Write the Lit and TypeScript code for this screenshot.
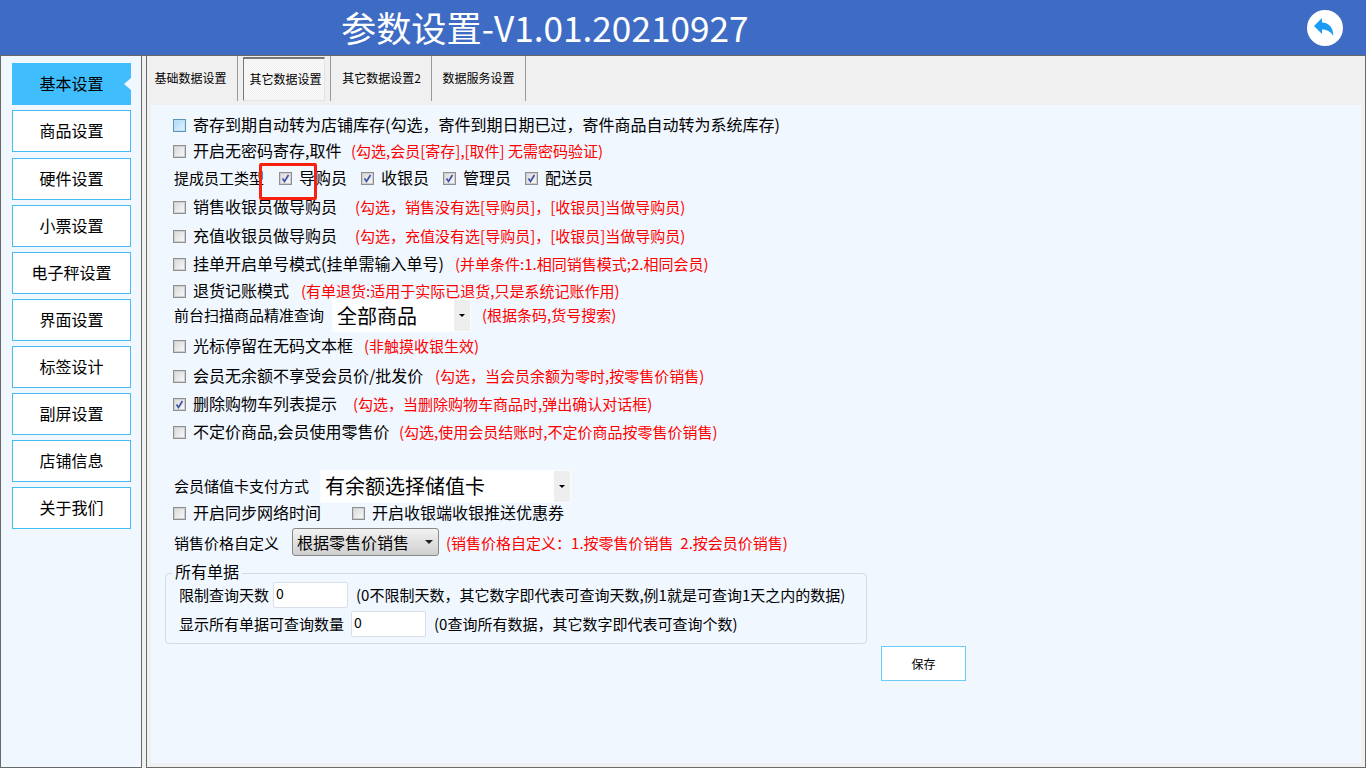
import { LitElement, html, css } from "lit";
import { customElement } from "lit/decorators.js";

type Cb = "off" | "on" | "hot";
/** mt: distance from the previous row; w: width of the label, so the note starts at its column */
interface Row { mt: number; box: Cb; text: string; w?: number; note?: string }

const rowsA: Row[] = [
  { mt: 0, box: "hot", text: "寄存到期自动转为店铺库存(勾选，寄件到期日期已过，寄件商品自动转为系统库存)" },
  { mt: 2, box: "off", text: "开启无密码寄存,取件", w: 158, note: "(勾选,会员[寄存],[取件] 无需密码验证)" },
];
const rowsB: Row[] = [
  { mt: 5, box: "off", text: "销售收银员做导购员", w: 162, note: "(勾选，销售没有选[导购员]，[收银员]当做导购员)" },
  { mt: 5, box: "off", text: "充值收银员做导购员", w: 162, note: "(勾选，充值没有选[导购员]，[收银员]当做导购员)" },
  { mt: 4, box: "off", text: "挂单开启单号模式(挂单需输入单号)", w: 262, note: "(并单条件:1.相同销售模式;2.相同会员)" },
  { mt: 3, box: "off", text: "退货记账模式", w: 108, note: "(有单退货:适用于实际已退货,只是系统记账作用)" },
];
const rowsC: Row[] = [
  { mt: 7, box: "off", text: "光标停留在无码文本框", w: 171, note: "(非触摸收银生效)" },
  { mt: 6, box: "off", text: "会员无余额不享受会员价/批发价", w: 242, note: "(勾选，当会员余额为零时,按零售价销售)" },
  { mt: 4, box: "on", text: "删除购物车列表提示", w: 160, note: "(勾选，当删除购物车商品时,弹出确认对话框)" },
  { mt: 4, box: "off", text: "不定价商品,会员使用零售价", w: 206, note: "(勾选,使用会员结账时,不定价商品按零售价销售)" },
];

const menu = ["基本设置", "商品设置", "硬件设置", "小票设置", "电子秤设置", "界面设置", "标签设计", "副屏设置", "店铺信息", "关于我们"];
const tabs = ["基础数据设置", "其它数据设置", "其它数据设置2", "数据服务设置"];
const staff = ["导购员", "收银员", "管理员", "配送员"];

@customElement("app-root")
export class AppRoot extends LitElement {
  static styles = css`
    :host { display: block; position: relative; width: 1366px; height: 768px; overflow: hidden; background: #f0f0f0;
      font-family: "Noto Sans CJK SC", "Liberation Sans", sans-serif; font-size: 16px; color: #000; }
    * { box-sizing: border-box; }
    .top { height: 56px; background: #3e6cc4; border-bottom: 1px solid #6a6a6a; display: flex; align-items: center; justify-content: space-between; padding: 0 23px 0 341px; }
    .title { color: #fff; font-size: 35.2px; line-height: 1; margin-top: -2px; }
    .back { width: 36px; height: 36px; display: block; }
    .main { display: flex; height: 712px; }
    .side { width: 142px; background: #f0f7ff; border: 1px solid #6a6a6a; border-top: 0; padding: 7px 10px 0 11px; display: flex; flex-direction: column; gap: 5px; margin-right: 4px; }
    .mi { height: 42px; background: #fff; border: 1px solid #45bcf3; font-size: 16px; display: flex; align-items: center; justify-content: center; position: relative; flex: none; padding-bottom: 2px; }
    .mi:nth-child(3) { margin-top: 1px; }
    .mi.sel { background: #40bdfd; border-color: #40bdfd; }
    .mi.sel::after { content: ""; position: absolute; right: -1px; top: 14px; border: 6px solid transparent; border-right: 7px solid #f0f7ff; border-left-width: 0; }
    .right { flex: 1; border: 1px solid #6a6a6a; border-top: 0; padding: 0 4px 4px 4px; display: flex; flex-direction: column; }
    .tabs { height: 49px; display: flex; margin-left: -4px; flex: none; }
    .tab { height: 45px; display: flex; align-items: center; justify-content: center; font-size: 12px; border-right: 1px solid #9a9a9a; flex: none; padding-bottom: 2px; }
    .t0 { width: 91px; padding-right: 3px; }
    .t1 { width: 82px; margin: 0 7px 0 5px; padding-left: 3px; }
    .t2 { width: 100px; }
    .t3 { width: 94px; }
    .tab.active { border: 1px solid #e4e4e4; border-top: 2px solid #777; border-left: 1px solid #777; border-radius: 1px; background: repeating-conic-gradient(#f0f0f0 0 25%, #fbfbfb 0 50%) 0 0 / 2px 2px; position: relative; height: 44px; margin-top: 1px; }
    .tab.active::after { content: ""; position: absolute; right: -7px; top: -3px; bottom: -1px; width: 1px; background: #9a9a9a; }
    .body { flex: 1; background: #f0f7ff; padding: 7px 0 0 22px; }
    .row { display: flex; align-items: center; white-space: pre; height: 24px; }
    .m26 { margin-top: 3px; }
    .box { width: 13px; height: 13px; border: 1px solid #8f8f8f; background: linear-gradient(135deg, #d8d8d8, #fafafa); box-shadow: inset 0 0 0 1px #cfcfcf; display: block; flex: none; margin-right: 7px; position: relative; top: 1px; }
    .box.hot { border-color: #5b96b8; background: linear-gradient(135deg, #a9d6f8, #e6f4fe); box-shadow: inset 0 0 0 1px #bfe0f5; }
    .box svg { display: block; }
    .note { color: #f00; font-size: 15px; }
    .lab { font-size: 15px; margin-left: 1px; }
    .combo { background: #fff; display: flex; align-items: center; justify-content: space-between; border: 1px solid #fafcff; flex: none; }
    .combo .v { font-size: 20px; padding-left: 4px; line-height: 1; }
    .combo .a { width: 16px; align-self: stretch; background: #eee; display: flex; align-items: center; justify-content: center; }
    .caret { width: 0; height: 0; border: 3px solid transparent; border-top: 3px solid #000; border-bottom: 0; display: block; }
    .c1 { width: 139px; height: 33px; margin: 3px 11px 0 8px; }
    .c2 { width: 251px; height: 33px; margin: 2px 0 0 11px; }
    .c3 { width: 147px; height: 28px; border: 1px solid #888; border-radius: 3px; background: linear-gradient(#f2f2f2, #cfcfcf); display: flex; align-items: center; justify-content: space-between; padding: 0 5px 0 4px; margin: 0 7px 0 13px; font-size: 16px; flex: none; }
    .c3 .caret { border-width: 4px 4px 0 4px; border-top-color: #222; }
    .staff { display: flex; align-items: center; margin-right: 14px; }
    .staff-lab { margin-right: 15px; }
    .gap31 { width: 31px; }
    .fs { position: relative; width: 702px; height: 71px; border: 1px solid #d5dbe3; border-radius: 4px; margin: 19px 0 0 -8px; padding: 6px 0 0 13px; }
    .leg { position: absolute; left: 6px; top: -13px; background: #f0f7ff; padding: 0 3px; font-size: 16px; line-height: 20px; }
    .fr { display: flex; align-items: center; height: 29px; white-space: nowrap; font-size: 15px; }
    .inp { height: 26px; background: #fff; border: 1px solid #d8dfe8; border-radius: 2px; width: 75px; font-size: 14px; padding-left: 2px; line-height: 20px; margin: 0 8px 0 4px; }
    .inp.second { margin-left: 7px; }
    .hint { font-size: 15px; }
    .save-row { display: flex; justify-content: flex-end; width: 793px; margin-top: 2px; }
    .save { width: 85px; height: 35px; background: #fff; border: 1px solid #6ccbf8; font-size: 12px; display: flex; align-items: center; justify-content: center; }
    .mark { position: absolute; left: 259px; top: 163px; width: 58px; height: 37px; border: 3px solid #f9200f; border-radius: 2px; }
  `;

  private box(kind: Cb) {
    return html`<span class="box ${kind === "hot" ? "hot" : ""}">${kind === "on" ? this.check() : ""}</span>`;
  }
  private check() {
    return html`<svg width="11" height="11" viewBox="0 0 11 11"><path d="M2.5 5.5 L4.5 8.5 L8.5 2" fill="none" stroke="#3f51a8" stroke-width="1.7"/></svg>`;
  }
  private row(r: Row) {
    return html`<div class="row" style="margin-top:${r.mt}px">
      ${this.box(r.box)}<span style=${r.w ? `width:${r.w}px` : ""}>${r.text}</span>
      ${r.note ? html`<span class="note">${r.note}</span>` : ""}
    </div>`;
  }
  render() {
    return html`
      <div class="top">
        <div class="title">参数设置-V1.01.20210927</div>
        <svg class="back" viewBox="0 0 36 36">
          <circle cx="18" cy="18" r="18" fill="#fff"/>
          <path d="M7 16 L15 8 V12.5 C22 12.8 26.5 18 26.3 26 C24 22 20.5 19.5 15 19.5 V24 Z" fill="#1a9cf5"/>
        </svg>
      </div>
      <div class="main">
        <div class="side">
          ${menu.map((m, i) => html`<div class="mi ${i === 0 ? "sel" : ""}">${m}</div>`)}
        </div>
        <div class="right">
          <div class="tabs">
            ${tabs.map((t, i) => html`<div class="tab t${i} ${i === 1 ? "active" : ""}">${t}</div>`)}
          </div>
          <div class="body">
            ${rowsA.map((r) => this.row(r))}
            <div class="row m26">
              <span class="lab staff-lab">提成员工类型</span>
              ${staff.map((s) => html`<span class="staff">${this.box("on")}<span>${s}</span></span>`)}
            </div>
            ${rowsB.map((r) => this.row(r))}
            <div class="row">
              <span class="lab">前台扫描商品精准查询</span>
              <div class="combo c1"><span class="v">全部商品</span><span class="a"><i class="caret"></i></span></div>
              <span class="note">(根据条码,货号搜索)</span>
            </div>
            ${rowsC.map((r) => this.row(r))}
            <div class="row" style="margin-top:30px">
              <span class="lab">会员储值卡支付方式</span>
              <div class="combo c2"><span class="v">有余额选择储值卡</span><span class="a"><i class="caret"></i></span></div>
            </div>
            <div class="row m26">
              ${this.box("off")}<span>开启同步网络时间</span>
              <span class="gap31"></span>
              ${this.box("off")}<span>开启收银端收银推送优惠券</span>
            </div>
            <div class="row" style="margin-top:6px">
              <span class="lab">销售价格自定义</span>
              <div class="c3"><span>根据零售价销售</span><i class="caret"></i></div>
              <span class="note">(销售价格自定义：1.按零售价销售  2.按会员价销售)</span>
            </div>
            <div class="fs">
              <span class="leg">所有单据</span>
              <div class="fr"><span>限制查询天数</span><div class="inp">0</div><span class="hint">(0不限制天数，其它数字即代表可查询天数,例1就是可查询1天之内的数据)</span></div>
              <div class="fr"><span>显示所有单据可查询数量</span><div class="inp second">0</div><span class="hint">(0查询所有数据，其它数字即代表可查询个数)</span></div>
            </div>
            <div class="save-row"><div class="save">保存</div></div>
          </div>
        </div>
      </div>
      <div class="mark"></div>
    `;
  }
}
